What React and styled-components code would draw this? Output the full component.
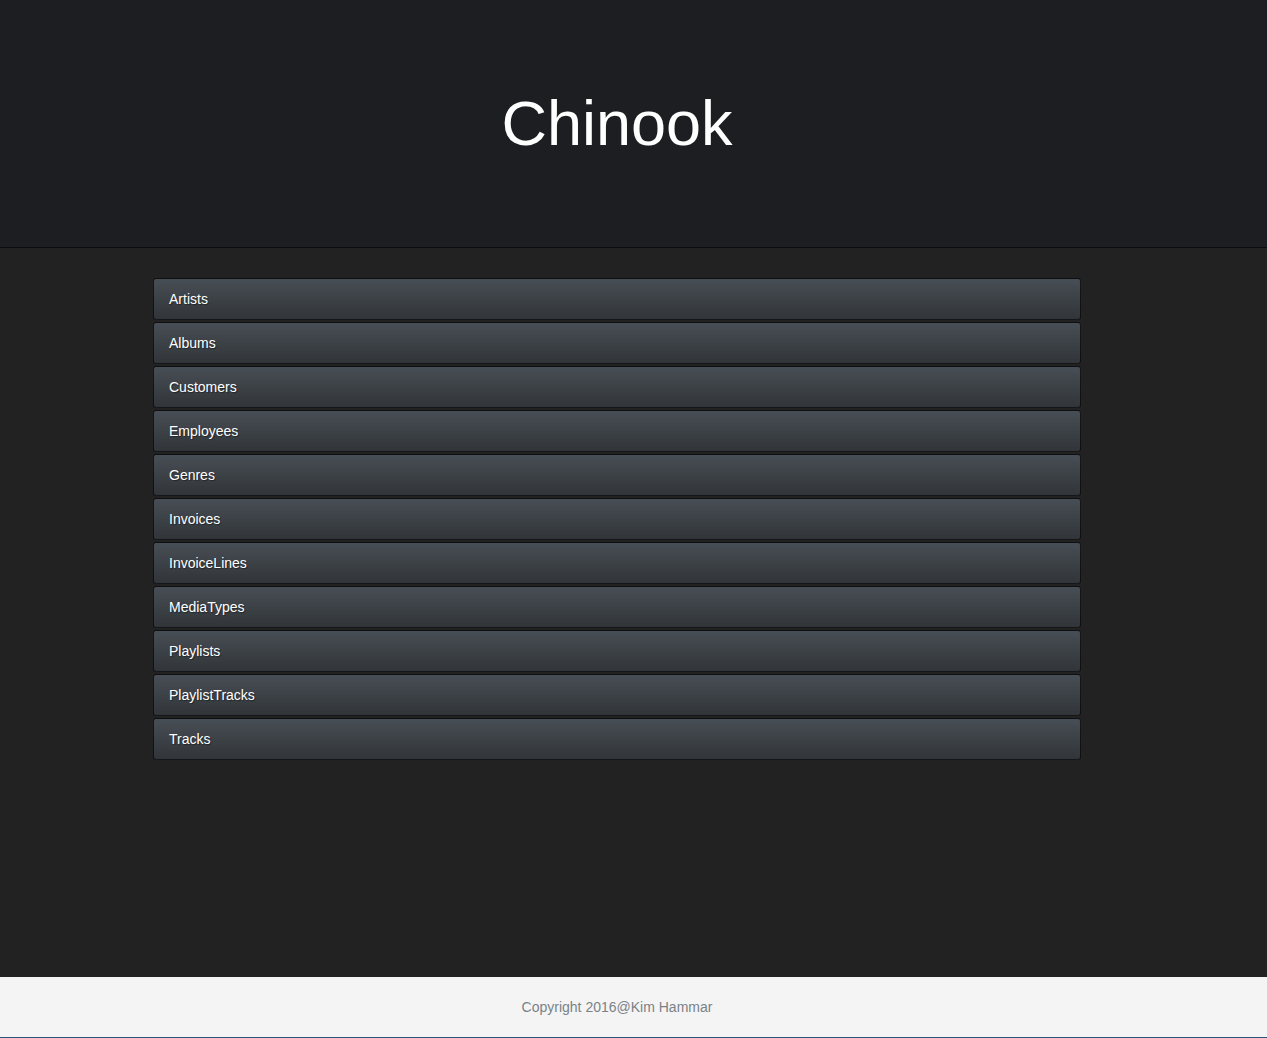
import React from "react"
import styled, { createGlobalStyle } from "styled-components"

const Global = createGlobalStyle`
  html, body {
    margin: 0;
    padding: 0;
    background: #222222;
    font-family: "Liberation Sans", Arial, sans-serif;
    font-size: 14px;
  }
`

const Page = styled.div`
  min-height: 1038px;
  display: flex;
  flex-direction: column;
`
const Header = styled.header`
  height: 247px;
  background-color: #1c1e22;
  border-bottom: 1px solid #0c0c0e;
  display: flex;
  justify-content: center;
  padding-right: 33px;
`
const Title = styled.h1`
  margin: 0;
  padding-top: 89px;
  font-size: 63px;
  font-weight: 400;
  line-height: 1.1;
  color: #ffffff;
`
const Main = styled.main`
  flex: 1;
  display: flex;
  justify-content: center;
  padding: 30px 33px 0 0;
`
const List = styled.ul`
  width: 928px;
  margin: 0;
  padding: 0;
  list-style: none;
  display: flex;
  flex-direction: column;
  gap: 2px;
`
const Item = styled.li`
  box-sizing: border-box;
  height: 42px;
  display: flex;
  align-items: center;
  padding: 0 15px;
  color: #ffffff;
  font-size: 14px;
  text-shadow: 1px 1px 1px rgba(0, 0, 0, 0.4);
  background-image: linear-gradient(#484e55, #3a3f44 60%, #313539);
  border: 1px solid rgba(0, 0, 0, 0.7);
  border-radius: 3px;
  cursor: pointer;
`
const Footer = styled.footer`
  height: 60px;
  background: #f4f4f4;
  border-bottom: 1px solid #2a5578;
  display: flex;
  align-items: center;
  justify-content: center;
  padding-right: 33px;
  color: #7a8288;
  font-size: 14px;
`

const tables = [
  "Artists",
  "Albums",
  "Customers",
  "Employees",
  "Genres",
  "Invoices",
  "InvoiceLines",
  "MediaTypes",
  "Playlists",
  "PlaylistTracks",
  "Tracks",
]

export default function App() {
  return (
    <>
      <Global />
      <Page>
        <Header>
          <Title>Chinook</Title>
        </Header>
        <Main>
          <List>
            {tables.map(t => (
              <Item key={t}>{t}</Item>
            ))}
          </List>
        </Main>
        <Footer>Copyright 2016@Kim Hammar</Footer>
      </Page>
    </>
  )
}
